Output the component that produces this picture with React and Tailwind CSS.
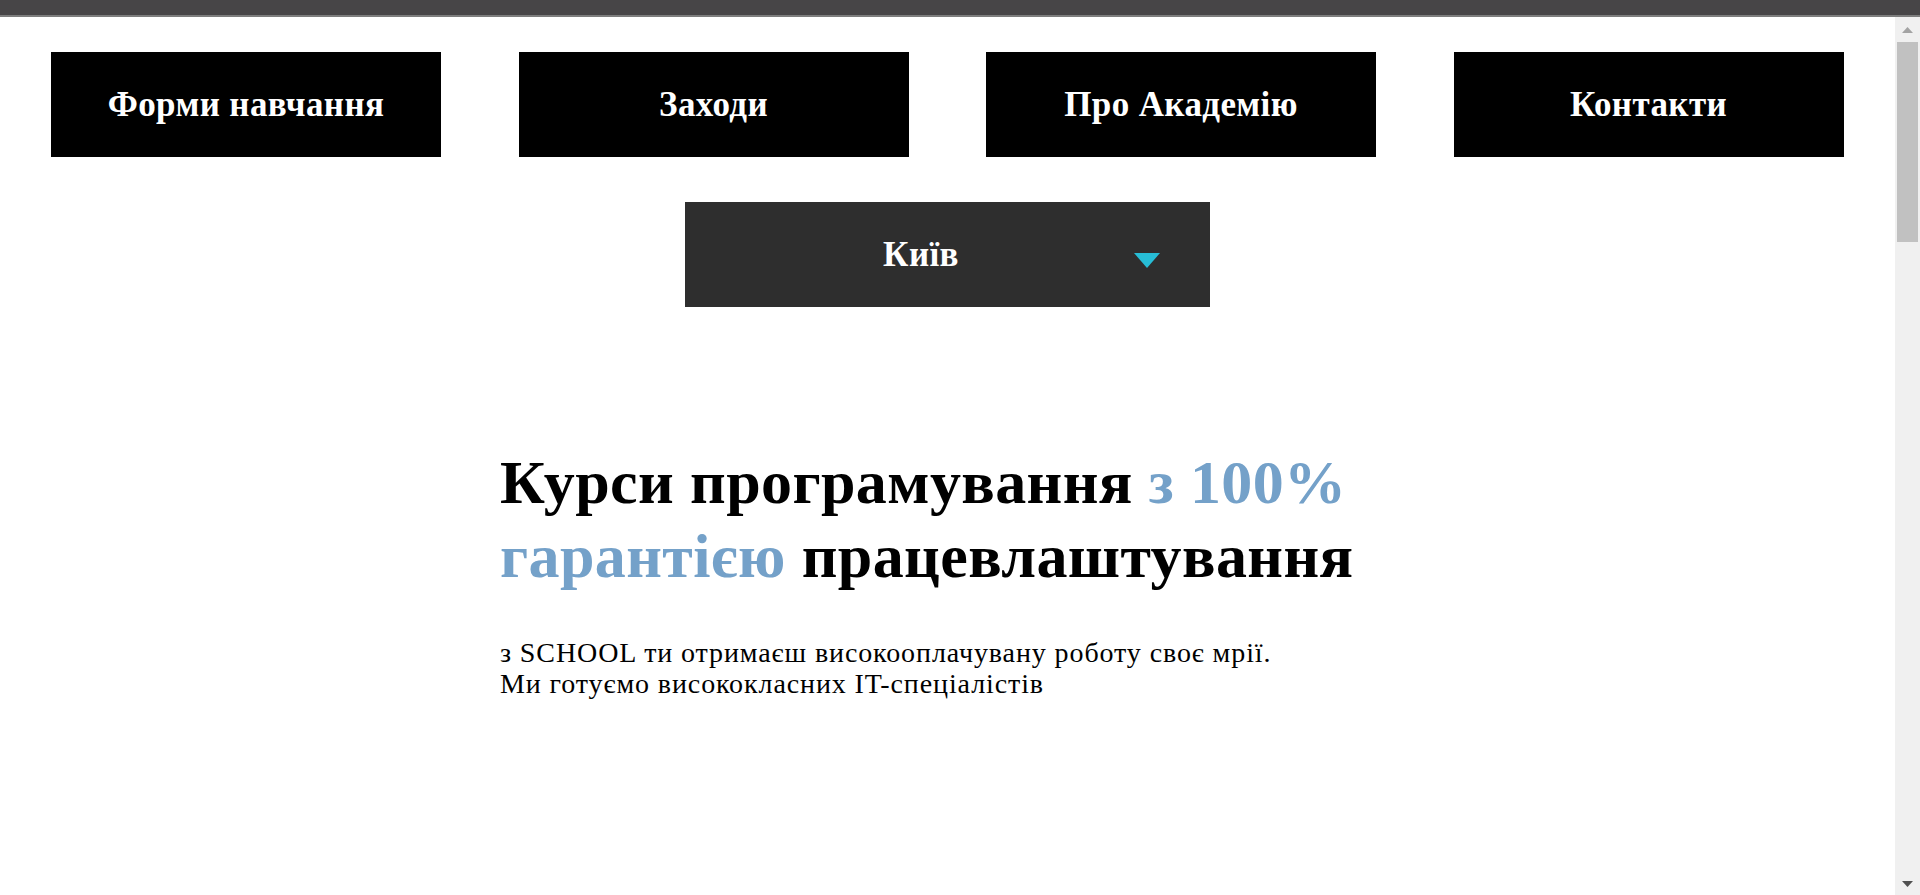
import React from "react";

const serif = { fontFamily: '"Liberation Serif", "Times New Roman", serif' };

function NavButton({ children }) {
  return (
    <a
      href="#"
      className="w-[390px] h-[105px] bg-black text-white flex items-center justify-center font-bold text-[35px] leading-none tracking-[0.4px]"
    >
      {children}
    </a>
  );
}

function ScrollBar() {
  return (
    <div className="w-[25px] bg-[#f0f0f0] flex flex-col items-center">
      <div className="h-[25px] w-full flex items-center justify-center">
        <svg width="11" height="6" viewBox="0 0 11 6">
          <polygon points="0,6 11,6 5.5,0" fill="#a3a3a3" />
        </svg>
      </div>
      <div className="w-[21px] h-[200px] bg-[#c1c1c1]" />
      <div className="flex-1" />
      <div className="h-[22px] w-full flex items-center justify-center">
        <svg width="11" height="6" viewBox="0 0 11 6">
          <polygon points="0,0 11,0 5.5,6" fill="#505050" />
        </svg>
      </div>
    </div>
  );
}

export default function App() {
  return (
    <div className="h-[895px] w-[1920px] flex flex-col overflow-hidden bg-white" style={serif}>
      <div className="h-[15px] bg-[#474547] shrink-0" />
      <div className="h-[2px] bg-[#7d7d7d] shrink-0" />
      <div className="flex flex-1 min-h-0">
        <main className="flex-1 flex flex-col pt-[35px]">
          <nav className="flex gap-[77.5px] pl-[51px]">
            <NavButton>Форми навчання</NavButton>
            <NavButton>Заходи</NavButton>
            <NavButton>Про Академію</NavButton>
            <NavButton>Контакти</NavButton>
          </nav>
          <div className="flex justify-center mt-[45px]">
            <div className="relative w-[525px] h-[105px] bg-[#2e2e2e] text-white flex items-center justify-center pr-[53px] font-bold text-[35px] leading-none tracking-[0.4px]">
              <span>Київ</span>
              <svg
                className="absolute right-[50px] top-[50px]"
                width="26"
                height="16"
                viewBox="0 0 26 16"
                style={{ filter: "blur(0.6px)" }}
              >
                <polygon points="0,1 26,1 13,16" fill="#27bdd6" />
              </svg>
            </div>
          </div>
          <section className="w-[895px] mx-auto mt-[138px]">
            <h1 className="text-[62px] leading-[74px] font-bold text-black tracking-[0.4px]">
              Курси програмування <span className="text-[#74a1c9]">з 100% гарантією</span>{" "}
              працевлаштування
            </h1>
            <p className="mt-[44px] text-[28px] leading-[31px] text-black tracking-[0.9px]">
              з SCHOOL ти отримаєш високооплачувану роботу своє мрії.
              <br />
              Ми готуємо висококласних IT-спеціалістів
            </p>
          </section>
        </main>
        <ScrollBar />
      </div>
    </div>
  );
}
